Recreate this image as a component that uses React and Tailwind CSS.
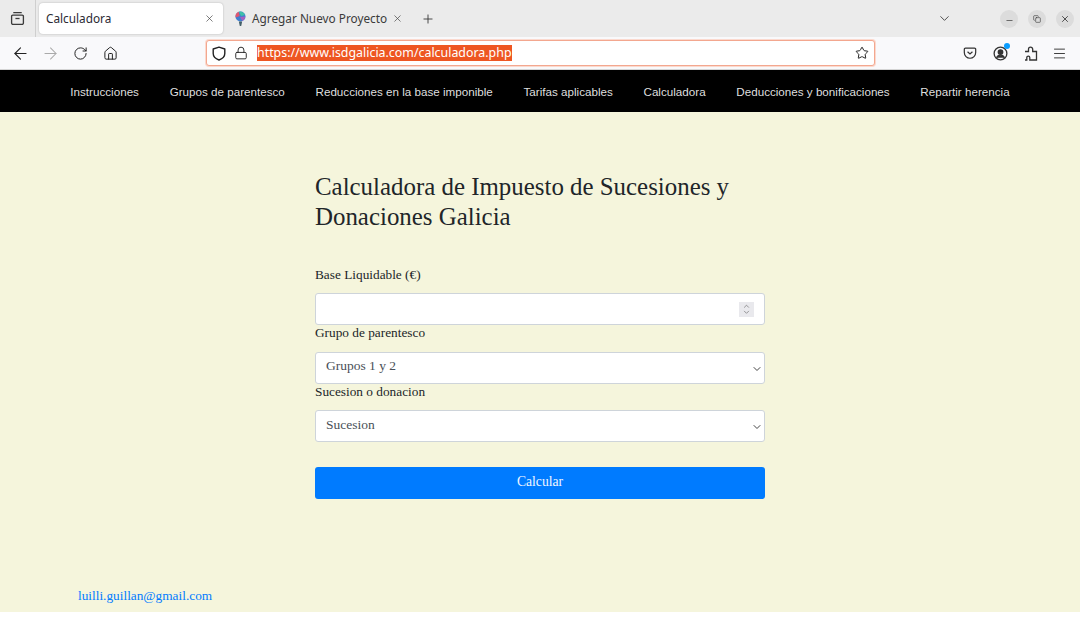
import React from "react";
import {
  ArrowLeft,
  ArrowRight,
  ChevronDown,
  ChevronUp,
  Copy,
  House,
  Lock,
  Menu,
  Minus,
  Plus,
  RotateCw,
  Star,
  X,
} from "lucide-react";

const serif = "font-['Liberation_Serif',serif]";
const ui = "font-['Noto_Sans',sans-serif]";

const navItems = [
  "Instrucciones",
  "Grupos de parentesco",
  "Reducciones en la base imponible",
  "Tarifas aplicables",
  "Calculadora",
  "Deducciones y bonificaciones",
  "Repartir herencia",
];

function TabStrip() {
  return (
    <div className="flex h-[37px] items-center bg-[#ebebeb]">
      <div className="flex h-full w-[36px] shrink-0 items-center justify-center border-r border-[#cfcfcf]">
        <svg width="15" height="15" viewBox="0 0 16 16" fill="none" stroke="#3b3b3b" strokeWidth="1.4">
          <path d="M3.500 1.800h9M1.700 5.500a1.200 1.200 0 0 1 1.200-1.200h10.200a1.200 1.200 0 0 1 1.200 1.200v7.300a1.500 1.500 0 0 1-1.500 1.500H3.200a1.500 1.500 0 0 1-1.500-1.500z" />
          <path d="M5.800 8h4.400" />
        </svg>
      </div>
      <div className="ml-[3px] flex h-[31px] w-[184px] shrink-0 items-center justify-between rounded-[4px] bg-white pl-[7px] pr-[8px] shadow-[0_0_2px_rgba(0,0,0,0.25)]">
        <span className={`${ui} text-[11.800px] text-[#2b2a33]`}>Calculadora</span>
        <X size={11} strokeWidth={1.5} className="text-[#444]" />
      </div>
      <div className="flex shrink-0 items-center pl-[11px]">
        <svg width="13" height="16" viewBox="0 0 13 16" className="shrink-0">
          <circle cx="6.500" cy="5.500" r="5" fill="#3f7fd0" />
          <path d="M1.700 6.500a5 5 0 0 1 3-5.700l1 4.200z" fill="#e0566f" />
          <path d="M5 .7a5 5 0 0 1 6 3.300L7 5z" fill="#3fc0a8" />
          <path d="M6 6l5.300-.5a5 5 0 0 1-2.800 4.500z" fill="#a85fc0" />
          <path d="M4.800 10.500h3.400L7.200 15h-1.400z" fill="#44606a" />
        </svg>
        <span className={`${ui} ml-[5px] w-[136px] whitespace-nowrap text-[11.800px] text-[#3b3b3b]`}>
          Agregar Nuevo Proyecto
        </span>
        <X size={11} strokeWidth={1.5} className="ml-[4px] shrink-0 text-[#444]" />
      </div>
      <Plus size={14} strokeWidth={1.5} className="ml-[18px] text-[#333]" />
      <div className="flex-1" />
      <ChevronDown size={15} strokeWidth={1.5} className="mr-[48px] text-[#444]" />
      <div className="mr-[6px] flex items-center gap-[10px]">
        <span className="flex h-[18px] w-[18px] items-center justify-center rounded-full bg-[#dcdcdc] pt-[3px]">
          <Minus size={9} strokeWidth={1.8} className="text-[#333]" />
        </span>
        <span className="flex h-[18px] w-[18px] items-center justify-center rounded-full bg-[#dcdcdc]">
          <Copy size={8} strokeWidth={1.8} className="text-[#333]" />
        </span>
        <span className="flex h-[18px] w-[18px] items-center justify-center rounded-full bg-[#dcdcdc]">
          <X size={10} strokeWidth={2} className="text-[#333]" />
        </span>
      </div>
    </div>
  );
}

function NavButton({ children }) {
  return <span className="flex w-[30px] shrink-0 justify-center">{children}</span>;
}

function Toolbar() {
  return (
    <div className="flex h-[33px] items-center border-b border-[#d4d4d4] bg-[#f9f9fb]">
      <div className="flex w-[206px] shrink-0 items-center pl-[5px] text-[#222]">
        <NavButton>
          <ArrowLeft size={19} strokeWidth={1.4} />
        </NavButton>
        <NavButton>
          <ArrowRight size={19} strokeWidth={1.3} className="text-[#aaa]" />
        </NavButton>
        <NavButton>
          <RotateCw size={15} strokeWidth={1.6} />
        </NavButton>
        <NavButton>
          <House size={15} strokeWidth={1.6} />
        </NavButton>
      </div>
      <div className="flex h-[26px] w-[669px] shrink-0 items-center rounded-[3px] border border-[#f3a78f] bg-white pl-[5px] pr-[5px] shadow-[0_0_0_1px_#fbd9ce]">
        <svg width="14" height="15" viewBox="0 0 14 15" fill="none" stroke="#222" strokeWidth="1.400">
          <path d="M7 1.200 12.800 3v4.500c0 3-2.500 5.300-5.800 6.500C3.700 12.800 1.200 10.500 1.200 7.500V3z" strokeLinejoin="round" />
        </svg>
        <Lock size={14} strokeWidth={1.6} className="ml-[8px] text-[#222]" />
        <span className={`${ui} ml-[9px] bg-[#ee5622] text-[12.400px] leading-[16px] text-white`}>
          https://www.isdgalicia.com/calculadora.php
        </span>
        <div className="flex-1" />
        <Star size={14} strokeWidth={1.7} className="text-[#222]" />
      </div>
      <div className="flex-1" />
      <div className="mr-[13px] flex items-center text-[#333]">
        <svg width="14" height="14" viewBox="0 0 16 16" fill="none" stroke="currentColor" strokeWidth="1.4">
          <path d="M2.800 2.500h10.400A1.300 1.300 0 0 1 14.500 3.800V7.500a6.500 6.500 0 0 1-13 0V3.800a1.300 1.300 0 0 1 1.300-1.300z" />
          <path d="M5.200 6.500 8 9l2.800-2.500" />
        </svg>
        <div className="relative ml-[16px]">
          <svg width="15" height="15" viewBox="0 0 16 16" fill="none" stroke="currentColor" strokeWidth="1.4">
            <circle cx="8" cy="8" r="6.800" />
            <circle cx="8" cy="6.500" r="2.400" fill="currentColor" />
            <path d="M3.800 12.500c.8-2 2.400-2.700 4.200-2.700s3.400.7 4.200 2.700" fill="currentColor" />
          </svg>
          <span className="absolute right-[-2px] top-[-3px] h-[6px] w-[6px] rounded-full bg-[#0a9dff]" />
        </div>
        <svg width="14" height="15" viewBox="0 0 14 15" fill="none" stroke="currentColor" strokeWidth="1.300" className="ml-[16px]">
          <path d="M1 5.500h3.500V3.300a2.100 2.100 0 1 1 4.200 0v2.200H12.500v8.500H5.800v-2.400a1.500 1.500 0 0 0-3 0V14H1" />
        </svg>
        <Menu size={15} strokeWidth={1.5} className="ml-[14px]" />
      </div>
    </div>
  );
}

function Field({ label, children }) {
  return (
    <div className="-mt-[1px]">
      <label className="block h-[17px] text-[13.300px] leading-[17px] text-[#212529]">{label}</label>
      {children}
    </div>
  );
}

function SelectBox({ value }) {
  return (
    <div className="relative mt-[10.300px]">
      <select
        defaultValue={value}
        className={`${serif} block h-[32px] w-full appearance-none rounded-[3px] border border-[#ced4da] bg-white pb-[2px] pl-[10px] text-[13.500px] text-[#495057]`}
      >
        <option>{value}</option>
      </select>
      <ChevronDown size={12} strokeWidth={2} className="absolute right-[2px] top-[11px] text-[#444]" />
    </div>
  );
}

export default function App() {
  return (
    <div className="flex h-[618px] w-[1080px] flex-col overflow-hidden bg-white">
      <TabStrip />
      <Toolbar />
      <nav className="flex h-[42px] shrink-0 items-center justify-center gap-[30.700px] bg-black pt-[1px] font-['Liberation_Sans',sans-serif] text-[11.650px] text-[#dfdfdf]">
        {navItems.map((item) => (
          <a key={item}>{item}</a>
        ))}
      </nav>
      <main className={`${serif} flex h-[500px] shrink-0 flex-col bg-[#f5f5dc]`}>
        <div className="mx-auto mt-[60px] w-[450px]">
          <h2 className="text-[24.900px] leading-[30px] text-[#212529]">
            Calculadora de Impuesto de Sucesiones y Donaciones Galicia
          </h2>
          <div className="mt-[35px]">
            <Field label="Base Liquidable (€)">
              <div className="mt-[10.300px] flex h-[32px] items-center justify-end rounded-[3px] border border-[#ced4da] bg-white pr-[10px]">
                <span className="flex h-[15px] w-[15px] flex-col items-center justify-center bg-[#e9e9ed] text-[#555]">
                  <ChevronUp size={9} strokeWidth={1.6} className="-mb-[1px]" />
                  <ChevronDown size={9} strokeWidth={1.6} className="-mt-[1px]" />
                </span>
              </div>
            </Field>
            <Field label="Grupo de parentesco">
              <SelectBox value="Grupos 1 y 2" />
            </Field>
            <Field label="Sucesion o donacion">
              <SelectBox value="Sucesion" />
            </Field>
            <button className="mt-[25px] block h-[32px] w-full rounded-[3px] bg-[#007bff] pb-[2px] text-[13.600px] text-[#f0f6ff]">
              Calcular
            </button>
          </div>
        </div>
        <div className="flex-1" />
        <a className="mb-[7px] ml-[78px] text-[13.300px] leading-[18px] text-[#007bff]">luilli.guillan@gmail.com</a>
      </main>
    </div>
  );
}
